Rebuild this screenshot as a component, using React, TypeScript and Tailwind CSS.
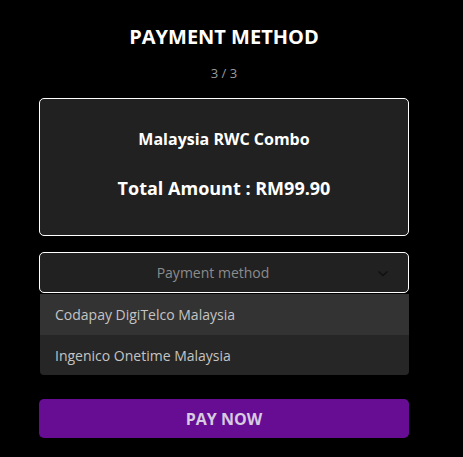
export default function App() {
  return (
    <div
      className="w-[463px] h-[457px] bg-black flex flex-col items-center pr-[15px]"
      style={{ fontFamily: '"Open Sans", sans-serif' }}
    >
      <div className="pt-[23px] text-[20px] font-bold text-white leading-[28px]">PAYMENT METHOD</div>
      <div className="mt-[13px] text-[13px] text-[#9a9a9a] leading-[18px]">3 / 3</div>

      <div className="mt-[16px] w-[370px] h-[138px] bg-[#212121] border border-white rounded-[5px] flex flex-col items-center">
        <div className="mt-[29px] text-[16px] font-bold text-white leading-[22px]">Malaysia RWC Combo</div>
        <div className="mt-[25px] text-[18px] font-bold text-white leading-[26px]">Total Amount : RM99.90</div>
      </div>

      <div className="mt-[16px] w-[370px]">
        <div className="relative h-[41px] bg-[#212121] border border-white rounded-[5px] flex items-center justify-center pr-[22px]">
          <span className="text-[14px] text-[#8c8c8c]">Payment method</span>
          <svg
            className="absolute right-[19px] top-[17px]"
            width="12"
            height="8"
            viewBox="0 0 12 8"
            fill="none"
          >
            <path d="M1.5 1.5 L6 5.5 L10.5 1.5" stroke="#111" strokeWidth="1.6" />
          </svg>
        </div>
        <div className="mt-[1px] ml-[1px] rounded-b-[4px] overflow-hidden shadow-[0_2px_6px_rgba(0,0,0,0.5)]">
          <div className="h-[41px] bg-[#333333] flex items-center pl-[15px] text-[14px] text-[#c4c4c4]">
            Codapay DigiTelco Malaysia
          </div>
          <div className="h-[40px] bg-[#262626] flex items-center pl-[15px] text-[14px] text-[#c4c4c4]">
            Ingenico Onetime Malaysia
          </div>
        </div>
      </div>

      <button className="mt-[24px] w-[370px] h-[39px] bg-[#670d94] rounded-[5px] text-[16px] font-bold text-[#d6cbe0]">
        PAY NOW
      </button>
    </div>
  );
}
